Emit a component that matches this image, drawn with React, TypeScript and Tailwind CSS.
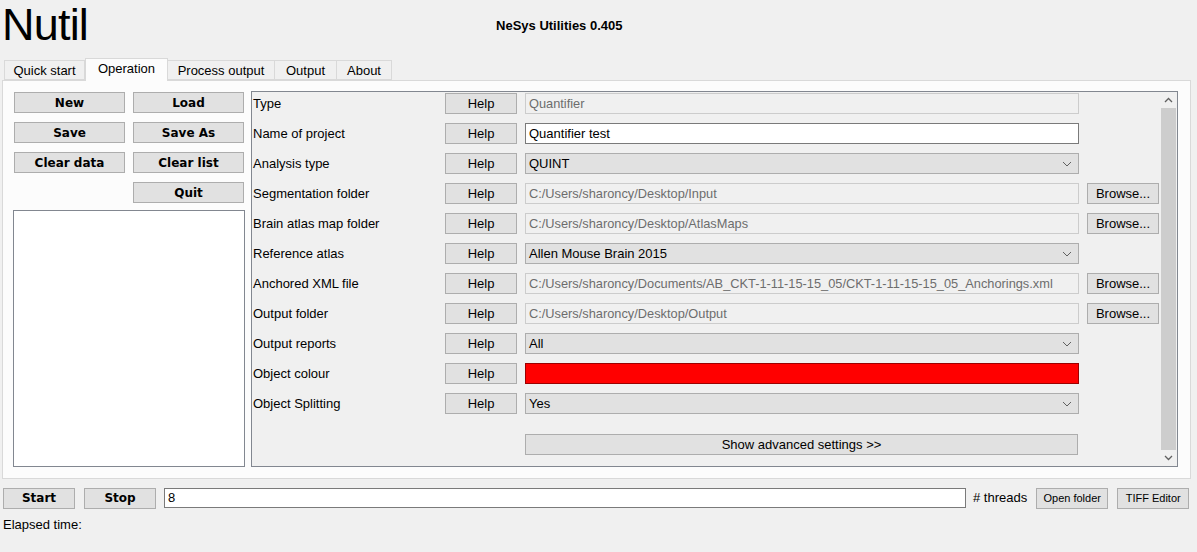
import React from 'react';

const Chevron: React.FC<{ up?: boolean }> = ({ up }) => (
  <svg width="9" height="6" viewBox="0 0 9 6" className="text-[#606060]">
    <path d={up ? 'M1 5 L4.5 1.5 L8 5' : 'M1 1 L4.5 4.5 L8 1'} fill="none" stroke="currentColor" strokeWidth="1.3" />
  </svg>
);

const ComboArrow: React.FC = () => (
  <svg width="10" height="6" viewBox="0 0 10 6">
    <path d="M1 1 L5 5 L9 1" fill="none" stroke="#606060" strokeWidth="1" />
  </svg>
);

type Row = {
  label: string;
  kind: 'disabled' | 'edit' | 'combo' | 'colour';
  value?: string;
  browse?: boolean;
};

const rows: Row[] = [
  { label: 'Type', kind: 'disabled', value: 'Quantifier' },
  { label: 'Name of project', kind: 'edit', value: 'Quantifier test' },
  { label: 'Analysis type', kind: 'combo', value: 'QUINT' },
  { label: 'Segmentation folder', kind: 'disabled', value: 'C:/Users/sharoncy/Desktop/Input', browse: true },
  { label: 'Brain atlas map folder', kind: 'disabled', value: 'C:/Users/sharoncy/Desktop/AtlasMaps', browse: true },
  { label: 'Reference atlas', kind: 'combo', value: 'Allen Mouse Brain 2015' },
  {
    label: 'Anchored XML file',
    kind: 'disabled',
    value: 'C:/Users/sharoncy/Documents/AB_CKT-1-11-15-15_05/CKT-1-11-15-15_05_Anchorings.xml',
    browse: true,
  },
  { label: 'Output folder', kind: 'disabled', value: 'C:/Users/sharoncy/Desktop/Output', browse: true },
  { label: 'Output reports', kind: 'combo', value: 'All' },
  { label: 'Object colour', kind: 'colour' },
  { label: 'Object Splitting', kind: 'combo', value: 'Yes' },
];

const tabs = [
  { name: 'Quick start', w: 'w-[81px]' },
  { name: 'Operation', w: 'w-[83px]' },
  { name: 'Process output', w: 'w-[107px]' },
  { name: 'Output', w: 'w-[62px]' },
  { name: 'About', w: 'w-[55px]' },
];

const btn = 'h-[21px] bg-[#e1e1e1] border border-[#adadad] flex items-center justify-center text-black';
const boldBtn = "font-['DejaVu_Sans',Verdana,sans-serif] font-bold text-[12px]";

const Field: React.FC<{ row: Row }> = ({ row }) => {
  if (row.kind === 'colour') {
    return <div className="w-[554px] h-[21px] bg-[#ff0000] border border-[#9b0000]" />;
  }
  if (row.kind === 'combo') {
    return (
      <div className="w-[554px] h-[21px] bg-[#e1e1e1] border border-[#adadad] flex items-center justify-between pl-[3px] pr-[6px]">
        <span>{row.value}</span>
        <ComboArrow />
      </div>
    );
  }
  if (row.kind === 'edit') {
    return (
      <div className="w-[554px] h-[21px] bg-white border border-[#7a7a7a] flex items-center pl-[3px]">
        {row.value}
      </div>
    );
  }
  return (
    <div className="w-[554px] h-[21px] bg-[#f0f0f0] border border-[#cccccc] flex items-center pl-[3px] text-[#6d6d6d] whitespace-nowrap overflow-hidden text-[12.8px]">
      {row.value}
    </div>
  );
};

export default function App() {
  return (
    <div className="w-[1197px] h-[552px] bg-[#f0f0f0] overflow-hidden text-[13px] text-black font-['Liberation_Sans',Arial,sans-serif]">
      {/* Header */}
      <div className="flex items-start h-[57px]">
        <div className="pl-[2px] pt-[1px] text-[45px] leading-[48px] tracking-[-0.8px]">Nutil</div>
        <div className="ml-[408px] mt-[16px] font-bold text-[13px]">NeSys Utilities 0.405</div>
      </div>

      {/* Tabs */}
      <div className="flex items-end pl-[4px] h-[23px]">
        {tabs.map((t) =>
          t.name === 'Operation' ? (
            <div
              key={t.name}
              className={`${t.w} h-[23px] bg-[#fcfcfc] border border-b-0 border-[#d9d9d9] flex items-center justify-center relative z-10 -mb-px pb-[2px]`}
            >
              {t.name}
            </div>
          ) : (
            <div
              key={t.name}
              className={`${t.w} h-[20px] bg-[#f0f0f0] border border-[#d9d9d9] border-l-0 first:border-l flex items-center justify-center pt-[1px]`}
            >
              {t.name}
            </div>
          )
        )}
      </div>

      {/* Panel */}
      <div className="ml-[2px] w-[1189px] h-[399px] bg-[#fcfcfc] border border-[#d9d9d9] flex pl-[10px] pt-[11px]">
        {/* Left column */}
        <div className="w-[232px] flex flex-col">
          <div className={`grid grid-cols-[111px_111px] gap-x-[8px] gap-y-[9px] pl-px ${boldBtn}`}>
            <div className={btn}>New</div>
            <div className={btn}>Load</div>
            <div className={btn}>Save</div>
            <div className={btn}>Save As</div>
            <div className={btn}>Clear data</div>
            <div className={btn}>Clear list</div>
            <div />
            <div className={btn}>Quit</div>
          </div>
          <div className="mt-[7px] w-[232px] h-[257px] bg-white border border-[#828790]" />
        </div>

        {/* Settings scroll area */}
        <div className="ml-[6px] -mt-px w-[927px] h-[376px] border border-[#828790] bg-[#f0f0f0] flex">
          <div className="flex-1 pt-[1px] pl-[1px]">
            <div className="flex flex-col gap-[9px]">
              {rows.map((r) => (
                <div key={r.label} className="flex items-center h-[21px]">
                  <div className="w-[192px]">{r.label}</div>
                  <div className={`${btn} w-[72px]`}>Help</div>
                  <div className="ml-[8px]">
                    <Field row={r} />
                  </div>
                  {r.browse && <div className={`${btn} ml-[8px] w-[72px]`}>Browse...</div>}
                </div>
              ))}
            </div>
            <div className="mt-[20px] ml-[272px]">
              <div className={`${btn} w-[553px]`}>Show advanced settings &gt;&gt;</div>
            </div>
          </div>
          {/* Scrollbar */}
          <div className="w-[17px] flex flex-col bg-[#f0f0f0]">
            <div className="h-[16px] flex items-center justify-center">
              <Chevron up />
            </div>
            <div className="flex-1 mx-[1px] bg-[#cdcdcd]" />
            <div className="h-[16px] flex items-center justify-center">
              <Chevron />
            </div>
          </div>
        </div>
      </div>

      {/* Bottom bar */}
      <div className="flex items-center mt-[8px] h-[22px] pl-[3px]">
        <div className={`${btn} w-[72px] ${boldBtn}`}>Start</div>
        <div className={`${btn} ml-[9px] w-[72px] ${boldBtn}`}>Stop</div>
        <div className="ml-[8px] w-[802px] h-[20px] bg-white border border-[#7a7a7a] flex items-center pl-[3px]">8</div>
        <div className="ml-[7px]">#&nbsp;threads</div>
        <div className={`${btn} ml-[9px] w-[72px] h-[20px] text-[11px]`}>Open folder</div>
        <div className={`${btn} ml-[9px] w-[72px] h-[20px] text-[11px]`}>TIFF Editor</div>
      </div>

      <div className="pl-[3px] mt-[6px]">Elapsed time:</div>
    </div>
  );
}
